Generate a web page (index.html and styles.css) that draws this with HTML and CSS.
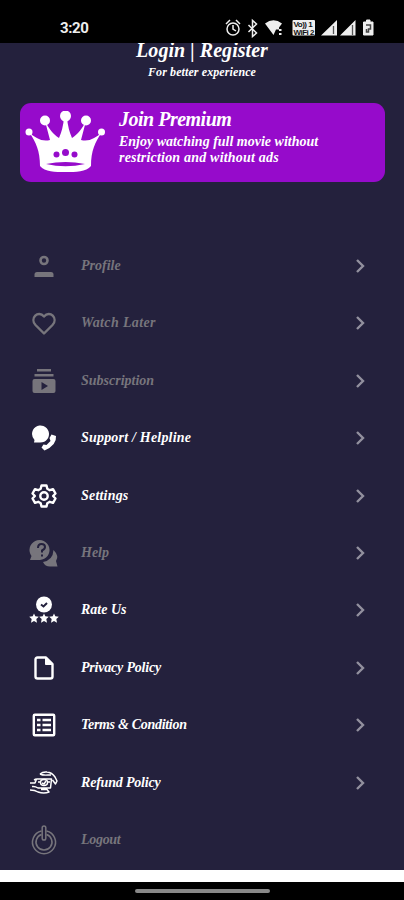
FILE: index.html
```html
<!DOCTYPE html>
<html lang="en">
<head>
    <meta charset="UTF-8">
    <meta name="viewport" content="width=device-width, initial-scale=1.0">
    <title>Account</title>
    <link rel="stylesheet" href="styles.css">
</head>
<body>
    <div class="status-bar">
        <span class="clock">3:20</span>
        <svg class="status-icons" width="152" height="20" viewBox="0 0 152 20" fill="#eee">
            <g fill="none" stroke="#eee" stroke-width="1.5">
                <circle cx="9" cy="11" r="6"/>
                <path d="M9 7v4l3 2M2 6l4-4M16 6l-4-4"/>
                <path d="M24.500 7l8 8-4 3.500v-16l4 3.500-8 8"/>
            </g>
            <path d="M41 5.500Q49.500-1 58 5.500L55 9.500v2h-3L49.500 17z"/>
            <path d="M55 11h2.500v2H55zM55 15h2.500v2H55z"/>
            <rect x="68.500" y="2" width="22.500" height="15.500" rx="1"/>
            <text class="volte" x="69.500" y="9">Vo)) 1</text>
            <text class="volte" x="69.500" y="16.500">WiFi 2</text>
            <path d="M97 17.500L113 2v15.500zM116 17.500L131.500 2v15.500z"/>
            <path d="M109.500 8v8M128.500 7v10" stroke="#555" stroke-width="1.300"/>
            <path d="M139.500 4h3V2h3.500v2h3v13h-9.500z" stroke="#eee" stroke-linejoin="round"/>
            <path d="M142 7h4.500v4h-2v3h-2v-3" fill="none" stroke="#444" stroke-width="1.500"/>
        </svg>
    </div>

    <main class="screen">
        <div class="account">
            <h1>Login | Register</h1>
            <p>For better experience</p>
        </div>

        <div class="premium">
            <svg class="crown" width="80" height="63" viewBox="0 0 80 63" fill="#fff">
                <circle cx="4" cy="21" r="3.500"/>
                <circle cx="20" cy="9.500" r="5"/>
                <circle cx="40.500" cy="5" r="5.500"/>
                <circle cx="61" cy="9.500" r="5"/>
                <circle cx="76.500" cy="21" r="3.500"/>
                <path d="M4 21C10 27 17 31 25 29L20 10C24 18 28 23 34 27Q38 18 39 7h3Q43 18 47 27C53 23 57 18 61 10L56 29C64 31 71 27 77 21C70 31 66 40 66 55C61 61 51 61 40.500 61S20 61 15 55C15 40 11 31 4 21z"/>
                <g fill="#960bcb">
                    <circle cx="31.500" cy="43.500" r="3"/>
                    <circle cx="40.500" cy="41.500" r="3.500"/>
                    <circle cx="49.500" cy="43.500" r="3"/>
                    <path d="M21 53Q40.500 49 60 53Q40.500 57.500 21 53z"/>
                </g>
            </svg>
            <div class="premium-text">
                <h2>Join Premium</h2>
                <p class="line-one">Enjoy watching full movie without</p>
                <p class="line-two">restriction and without ads</p>
            </div>
        </div>

        <ul class="menu">
            <li class="menu-item muted">
                <svg class="icon" viewBox="0 0 28 28">
                    <circle cx="14" cy="8.500" r="3.500" fill="none" stroke="currentColor" stroke-width="2.600"/>
                    <path d="M4.500 25v-2.500q0-2.500 2.500-2.500h14q2.500 0 2.500 2.500v2.500z"/>
                </svg>
                <span class="label">Profile</span>
                <svg class="chevron" viewBox="0 0 12 16"><path d="M3 2l6 6-6 6"/></svg>
            </li>
            <li class="menu-item muted">
                <svg class="icon line" viewBox="0 0 28 28">
                    <path d="M14 24.500L5.500 16C-.5 9.500 8 .5 14 7.500C20 .5 28.500 9.500 22.500 16z"/>
                </svg>
                <span class="label wider">Watch Later</span>
                <svg class="chevron" viewBox="0 0 12 16"><path d="M3 2l6 6-6 6"/></svg>
            </li>
            <li class="menu-item muted">
                <svg class="icon" viewBox="0 0 28 28">
                    <path d="M7 2h14v2.500H7zM4.500 7h19v2.500h-19z"/>
                    <path fill-rule="evenodd" d="M4.500 12h19q2 0 2 2v10q0 2-2 2h-19q-2 0-2-2V14q0-2 2-2zM11.500 15v8l6.500-4z"/>
                </svg>
                <span class="label">Subscription</span>
                <svg class="chevron" viewBox="0 0 12 16"><path d="M3 2l6 6-6 6"/></svg>
            </li>
            <li class="menu-item">
                <svg class="icon" viewBox="0 0 28 28">
                    <path d="M2 10a8.500 8.500 0 1 1 15 5.500Q15 18.500 10 18.500H4l.5-2.500Q2 13 2 10z"/>
                    <path d="M21.500 10.500l4.500 1.500q1 9-11.500 14.500l-3-3 2-3 3 .5 4-4-1-3z"/>
                </svg>
                <span class="label wide">Support / Helpline</span>
                <svg class="chevron" viewBox="0 0 12 16"><path d="M3 2l6 6-6 6"/></svg>
            </li>
            <li class="menu-item">
                <svg class="icon line" viewBox="0 0 28 28">
                    <path d="M11.500 3.500h5l.8 3.300 2.500 1.400 3.200-1 2.500 4.300-2.400 2.500 2.400 2.500-2.500 4.300-3.200-1-2.500 1.400-.8 3.300h-5l-.8-3.300-2.500-1.400-3.200 1-2.500-4.300L4.900 14l-2.400-2.500L5 7.200l3.200 1 2.500-1.400z"/>
                    <circle cx="14" cy="14" r="3.700"/>
                </svg>
                <span class="label wide">Settings</span>
                <svg class="chevron" viewBox="0 0 12 16"><path d="M3 2l6 6-6 6"/></svg>
            </li>
            <li class="menu-item muted">
                <svg class="icon" viewBox="0 0 28 28">
                    <path d="M0 21l1.500-4a10 10 0 1 1 8.500 4z"/>
                    <path d="M23.500 11q6 6 2.500 11l1.500 5.500H20q-5 0-7-4.500 10-2 10.500-12z"/>
                    <path class="cutout" d="M8 9q0-4 3.500-4t3.500 3q0 2-3 3.500v2M12 15.500v2"/>
                </svg>
                <span class="label">Help</span>
                <svg class="chevron" viewBox="0 0 12 16"><path d="M3 2l6 6-6 6"/></svg>
            </li>
            <li class="menu-item">
                <svg class="icon" viewBox="0 0 28 28">
                    <circle cx="14" cy="8.500" r="8"/>
                    <path class="cutout" d="M11 8.500l2.500 2 3.500-3.500"/>
                    <path d="M4 17.500l1.300 2.800 3.500.4-2.500 2.300.7 3.700-3-1.700-3 1.700.7-3.700-2.500-2.300 3.500-.4zM14 17.500l1.300 2.800 3.500.4-2.500 2.300.7 3.700-3-1.700-3 1.700.7-3.700-2.500-2.300 3.500-.4zM24 17.500l1.300 2.800 3.500.4-2.500 2.300.7 3.700-3-1.700-3 1.700.7-3.700-2.500-2.300 3.500-.4z"/>
                </svg>
                <span class="label">Rate Us</span>
                <svg class="chevron" viewBox="0 0 12 16"><path d="M3 2l6 6-6 6"/></svg>
            </li>
            <li class="menu-item">
                <svg class="icon line" viewBox="0 0 28 28">
                    <path d="M7.500 3.500h8.500l6.500 6.500v12.500q0 2-2 2h-13q-2 0-2-2v-17q0-2 2-2z"/>
                    <path d="M15.500 3.500v7h7z" fill="currentColor" stroke-width="1"/>
                </svg>
                <span class="label tight">Privacy Policy</span>
                <svg class="chevron" viewBox="0 0 12 16"><path d="M3 2l6 6-6 6"/></svg>
            </li>
            <li class="menu-item">
                <svg class="icon line" viewBox="0 0 28 28">
                    <rect x="3.800" y="3.800" width="20.400" height="20.400" rx="1"/>
                    <path d="M7 9h3.500M7 14h3.500M7 19h3.500M12.500 9H21M12.500 14H21M12.500 19H21"/>
                </svg>
                <span class="label tighter">Terms &amp; Condition</span>
                <svg class="chevron" viewBox="0 0 12 16"><path d="M3 2l6 6-6 6"/></svg>
            </li>
            <li class="menu-item">
                <svg class="icon line thin" viewBox="0 0 28 28">
                    <path d="M10 5q3-2.500 7-2 5 .5 8 5l2 4-1.500 3-3-4M10 5q3 1.500 8 1h3M0 14h5l1.500-4h15l-1 9H8q-3-2-6-1.500M0 21q5 0 8 2 6 2 11 0l-2-2.500h-6"/>
                    <ellipse cx="14" cy="13.500" rx="3.500" ry="3"/>
                    <path d="M8 13h2M18 13h2M12 14l2 1 2-3M4 11l2-1"/>
                </svg>
                <span class="label tight">Refund Policy</span>
                <svg class="chevron" viewBox="0 0 12 16"><path d="M3 2l6 6-6 6"/></svg>
            </li>
            <li class="menu-item muted">
                <svg class="icon line thin" viewBox="0 0 28 28">
                    <path d="M11.500 5a11.500 11.500 0 1 0 5 0"/>
                    <path d="M11.500 8.500a8 8 0 1 0 5 0"/>
                    <rect x="12.200" y="0" width="3.600" height="14" rx="1.800"/>
                </svg>
                <span class="label tighter">Logout</span>
            </li>
        </ul>
    </main>

    <div class="nav-bar">
        <span class="nav-handle"></span>
    </div>
</body>
</html>
```
FILE: styles.css
```css
* {
    box-sizing: border-box;
}

body {
    margin: 0;
    height: 900px;
    display: flex;
    flex-direction: column;
    overflow: hidden;
    background: #ffffff;
    color: #ffffff;
    font-family: "Liberation Serif", serif;
    font-style: italic;
    font-weight: bold;
}

h1, h2, p, ul {
    margin: 0;
    padding: 0;
}

.status-bar {
    height: 43px;
    flex-shrink: 0;
    padding: 18px 28px 0 60px;
    display: flex;
    justify-content: space-between;
    background: #000000;
}

.clock {
    font: bold 15px/20px Roboto, sans-serif;
    letter-spacing: -0.4px;
    color: #eeeeee;
}

.status-icons {
    display: block;
}

.volte {
    font: bold 8px "Liberation Sans", sans-serif;
    fill: #111111;
    letter-spacing: -0.5px;
}

.screen {
    height: 827px;
    flex-shrink: 0;
    overflow: hidden;
    background: #24213d;
}

.account {
    height: 60px;
    text-align: center;
}

.account h1 {
    font-size: 20px;
    line-height: 14px;
    letter-spacing: 0.05px;
}

.account p {
    padding-top: 4px;
    font-size: 12px;
    line-height: 22px;
    letter-spacing: 0.1px;
}

.premium {
    height: 79px;
    margin: 0 19px 0 20px;
    padding: 7px 5px;
    display: flex;
    gap: 14px;
    border-radius: 11px;
    background: #960bcb;
}

.crown {
    flex-shrink: 0;
    margin-top: 1px;
}

.premium-text {
    white-space: nowrap;
}

.premium h2 {
    font-size: 20px;
    line-height: 18px;
    letter-spacing: -0.5px;
    margin-bottom: 6px;
}

.premium p {
    font-size: 14px;
    line-height: 16px;
}

.premium .line-two {
    letter-spacing: 0.2px;
}

.menu {
    padding-top: 55.4px;
    list-style: none;
}

.menu-item {
    height: 57.4px;
    padding: 0 37px 0 30px;
    display: flex;
    align-items: center;
}

.icon {
    width: 28px;
    height: 28px;
    flex-shrink: 0;
    fill: currentColor;
    overflow: visible;
}

.line {
    fill: none;
    stroke: currentColor;
    stroke-width: 2.4;
    stroke-linejoin: round;
}

.thin {
    stroke-width: 1.5;
}

.cutout {
    fill: none;
    stroke: #24213d;
    stroke-width: 2;
}

.label {
    margin-left: 23px;
    font-size: 14px;
    white-space: nowrap;
}

.wide {
    letter-spacing: 0.2px;
}

.wider {
    letter-spacing: 0.35px;
}

.tight {
    letter-spacing: -0.2px;
}

.tighter {
    letter-spacing: -0.3px;
}

.muted .icon,
.muted .label {
    color: #77757c;
}

.chevron {
    width: 12px;
    height: 16px;
    margin-left: auto;
    margin-right: 1px;
    fill: none;
    stroke: #92909e;
    stroke-width: 2.4;
}

.nav-bar {
    height: 18px;
    margin-top: 12px;
    flex-shrink: 0;
    display: flex;
    justify-content: center;
    padding-top: 7px;
    background: #000000;
}

.nav-handle {
    width: 135px;
    height: 4px;
    border-radius: 2px;
    background: #888888;
}
```
